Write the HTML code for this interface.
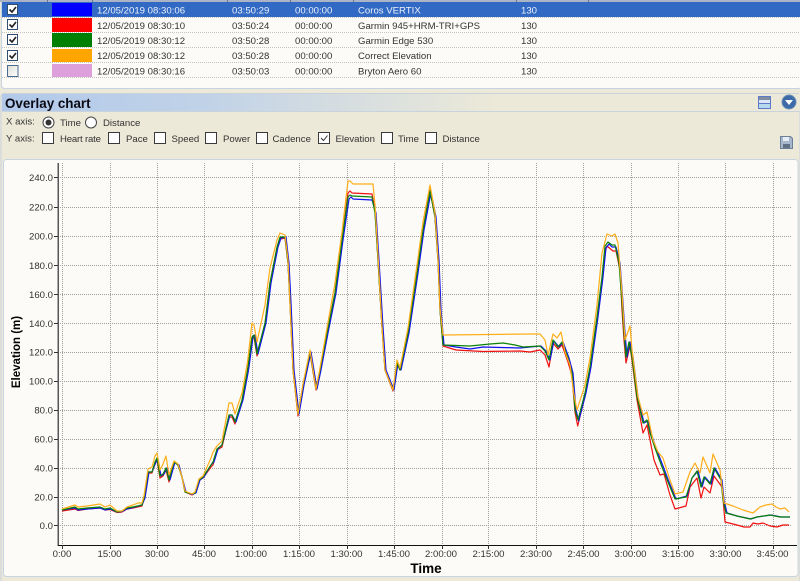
<!DOCTYPE html>
<html><head><meta charset="utf-8"><style>
html,body{margin:0;padding:0;background:#ECE9D8;overflow:hidden}
svg{display:block;filter:blur(.3px)}
text{font-family:"Liberation Sans",sans-serif;font-size:9.6px;fill:#333}
.b{font-weight:bold;fill:#000}
.g{stroke:#a0a09b;stroke-width:1;stroke-dasharray:1 1;fill:none;shape-rendering:crispEdges}
.c{fill:none;stroke-width:1.2;stroke-linejoin:round}
.box{fill:#fff;stroke:#2f4f6f;stroke-width:1}
.ck{fill:none;stroke:#222;stroke-width:1.6}
.ck2{fill:none;stroke:#333;stroke-width:1}
.bx{fill:#fff;stroke:#3a3a3a;stroke-width:1}
</style></head><body>
<svg xmlns="http://www.w3.org/2000/svg" width="800" height="581" viewBox="0 0 800 581">
<defs>
<linearGradient id="hd" x1="0" x2="1" y1="0" y2="0"><stop offset="0" stop-color="#B2C9EA"/><stop offset=".25" stop-color="#C0D2E8"/><stop offset=".62" stop-color="#ECE9D8"/><stop offset="1" stop-color="#ECE9D8"/></linearGradient>
<linearGradient id="cb" x1="0" x2="1" y1="0" y2="1"><stop offset="0" stop-color="#dcdcd6"/><stop offset="1" stop-color="#fff"/></linearGradient>
</defs>
<rect width="800" height="581" fill="#ECE9D8"/>
<!-- table -->
<rect x="1.5" y="-4" width="800" height="92.5" rx="3" fill="#FCFBF7" stroke="#C5D3E4"/>
<rect x="0" y="0" width="800" height="2" fill="#ABB4C6"/>
<g fill="#6c7486"><rect x="47" y="0" width="1" height="2"/><rect x="92" y="0" width="1" height="2"/><rect x="227" y="0" width="1" height="2"/><rect x="290" y="0" width="1" height="2"/><rect x="353" y="0" width="1" height="2"/><rect x="516" y="0" width="1" height="2"/><rect x="588" y="0" width="1" height="2"/></g>
<rect x="2" y="2" width="798" height="15" fill="#3169C4"/>
<g stroke="#c4c3bd" stroke-dasharray="1 1" shape-rendering="crispEdges"><line x1="2" x2="800" y1="32.5" y2="32.5"/><line x1="2" x2="800" y1="47.5" y2="47.5"/><line x1="2" x2="800" y1="62.5" y2="62.5"/><line x1="2" x2="800" y1="77.5" y2="77.5"/><line x1="2" x2="800" y1="17.5" y2="17.5"/></g>
<rect x="52" y="3" width="40" height="13" fill="#0000FF"/>
<rect x="52" y="18" width="40" height="14" fill="#FF0000"/>
<rect x="52" y="33" width="40" height="14" fill="#008000"/>
<rect x="52" y="49" width="40" height="13" fill="#FFA500"/>
<rect x="52" y="64" width="40" height="13" fill="#DDA0DD"/>
<g>
<rect class="box" x="7.5" y="4.5" width="10" height="10" fill="#fff"/><path class="ck" d="M9.5 9.5l2.5 2.5 4-5"/>
<rect class="box" x="7.5" y="19.5" width="10" height="10"/><path class="ck" d="M9.5 24.5l2.5 2.5 4-5"/>
<rect class="box" x="7.5" y="34.5" width="10" height="10"/><path class="ck" d="M9.5 39.5l2.5 2.5 4-5"/>
<rect class="box" x="7.5" y="50.5" width="10" height="10"/><path class="ck" d="M9.5 55.5l2.5 2.5 4-5"/>
<rect x="7.5" y="65.5" width="10.5" height="11" fill="url(#cb)" stroke="#4a6c90"/>
</g>
<g>
<g><text x="97" y="13.5" style="fill:#eef2fa">12/05/2019 08:30:06</text><text x="232" y="13.5" style="fill:#eef2fa">03:50:29</text><text x="295" y="13.5" style="fill:#eef2fa">00:00:00</text><text x="358" y="13.5" style="fill:#eef2fa">Coros VERTIX</text><text x="521" y="13.5" style="fill:#eef2fa">130</text></g>
<text x="97" y="29">12/05/2019 08:30:10</text><text x="232" y="29">03:50:24</text><text x="295" y="29">00:00:00</text><text x="358" y="29">Garmin 945+HRM-TRI+GPS</text><text x="521" y="29">130</text>
<text x="97" y="44">12/05/2019 08:30:12</text><text x="232" y="44">03:50:28</text><text x="295" y="44">00:00:00</text><text x="358" y="44">Garmin Edge 530</text><text x="521" y="44">130</text>
<text x="97" y="59">12/05/2019 08:30:12</text><text x="232" y="59">03:50:28</text><text x="295" y="59">00:00:00</text><text x="358" y="59">Correct Elevation</text><text x="521" y="59">130</text>
<text x="97" y="74.5">12/05/2019 08:30:16</text><text x="232" y="74.5">03:50:03</text><text x="295" y="74.5">00:00:00</text><text x="358" y="74.5">Bryton Aero 60</text><text x="521" y="74.5">130</text>
</g>
<!-- overlay header -->
<rect x="1" y="93.5" width="799" height="490" rx="3" fill="#ECE9D8" stroke="#C9D1DA"/>
<rect x="2" y="94" width="798" height="17" fill="url(#hd)"/>
<line x1="2" x2="800" y1="111.5" y2="111.5" stroke="#C9D3DD"/>
<text x="5" y="108" class="b" style="font-size:13.4px;fill:#0a0a14">Overlay chart</text>
<rect x="758.5" y="96.5" width="12" height="12" fill="#fff" stroke="#5f78c8"/><rect x="759" y="97" width="11" height="3" fill="#7f8ea0"/><rect x="759" y="100" width="11" height="3" fill="#dbe6f8"/><rect x="759" y="104" width="11" height="4" fill="#b7d9f0"/><line x1="759" x2="770" y1="103.5" y2="103.5" stroke="#5f78c8"/>
<circle cx="789" cy="102" r="7" fill="#3C6BA8"/><circle cx="789" cy="102" r="7" fill="none" stroke="#6f8fb8"/><path d="M785 100h8l-4 5z" fill="#fff"/>
<!-- controls -->
<text x="6" y="124.5">X axis:</text>
<circle cx="48.5" cy="122.5" r="5.5" fill="#fff" stroke="#444"/><circle cx="48.5" cy="122.5" r="3" fill="#333"/>
<text x="60" y="126">Time</text>
<circle cx="91" cy="122.5" r="5.5" fill="#fff" stroke="#444"/>
<text x="103" y="126">Distance</text>
<text x="6" y="141.5">Y axis:</text>
<rect class="bx" x="42.5" y="132.5" width="11" height="11"/><text x="60" y="142" textLength="41">Heart rate</text>
<rect class="bx" x="108.5" y="132.5" width="11" height="11"/><text x="126" y="142">Pace</text>
<rect class="bx" x="154.5" y="132.5" width="11" height="11"/><text x="171.5" y="142">Speed</text>
<rect class="bx" x="205.5" y="132.5" width="11" height="11"/><text x="223" y="142">Power</text>
<rect class="bx" x="256.5" y="132.5" width="11" height="11"/><text x="272.5" y="142">Cadence</text>
<rect class="bx" x="318.5" y="132.5" width="11" height="11"/><path class="ck2" d="M321 138l2.500 2.500 4-5"/><text x="335.5" y="142">Elevation</text>
<rect class="bx" x="381.5" y="132.5" width="11" height="11"/><text x="398" y="142">Time</text>
<rect class="bx" x="425.5" y="132.5" width="11" height="11"/><text x="442.5" y="142">Distance</text>
<path d="M780.5 136.5h10l2 2v10h-12z" fill="#a8b8cc" stroke="#6d8098"/><rect x="783" y="137" width="6" height="4" fill="#e8edf3"/><rect x="783" y="144" width="7" height="4" fill="#5f6f84"/>
<!-- chart panel -->
<rect x="3.5" y="159.5" width="794.5" height="417" rx="3" fill="#FCFBF7" stroke="#C6D4E4"/>
<g class="g">
<path d="M58 177.5H792M58 207.5H792M58 236.5H792M58 265.5H792M58 294.5H792M58 323.5H792M58 352.5H792M58 381.5H792M58 410.5H792M58 439.5H792M58 468.5H792M58 497.5H792M58 525.5H792"/>
<path d="M62.5 163V545M110.5 163V545M157.5 163V545M204.5 163V545M252.5 163V545M299.5 163V545M347.5 163V545M394.5 163V545M442.5 163V545M488.5 163V545M536.5 163V545M583.5 163V545M631.5 163V545M678.5 163V545M725.5 163V545M773.5 163V545"/>
</g>
<!-- axes -->
<g stroke="#333" fill="none" shape-rendering="crispEdges">
<path d="M58 163V546" stroke-width="1.5" stroke="#55555a"/>
<path d="M58 545.5H797" stroke="#111"/>
<path d="M54 177.5h4M54 207.5h4M54 236.5h4M54 265.5h4M54 294.5h4M54 323.5h4M54 352.5h4M54 381.5h4M54 410.5h4M54 439.5h4M54 468.5h4M54 497.5h4M54 525.5h4"/>
<path d="M62.5 545v4M110.5 545v4M157.5 545v4M204.5 545v4M252.5 545v4M299.5 545v4M347.5 545v4M394.5 545v4M442.5 545v4M488.5 545v4M536.5 545v4M583.5 545v4M631.5 545v4M678.5 545v4M725.5 545v4M773.5 545v4"/>
</g>
<g text-anchor="end">
<text x="53" y="181">240.0</text><text x="53" y="210.5">220.0</text><text x="53" y="239.5">200.0</text><text x="53" y="269">180.0</text><text x="53" y="298">160.0</text><text x="53" y="327">140.0</text><text x="53" y="355.5">120.0</text><text x="53" y="384.5">100.0</text><text x="53" y="413.5">80.0</text><text x="53" y="442.5">60.0</text><text x="53" y="471.5">40.0</text><text x="53" y="500.5">20.0</text><text x="53" y="529">0.0</text>
</g>
<g text-anchor="middle">
<text x="62" y="557">0:00</text><text x="109.5" y="557">15:00</text><text x="157" y="557">30:00</text><text x="204" y="557">45:00</text><text x="251" y="557">1:00:00</text><text x="299" y="557">1:15:00</text><text x="346.5" y="557">1:30:00</text><text x="394" y="557">1:45:00</text><text x="441" y="557">2:00:00</text><text x="488.5" y="557">2:15:00</text><text x="536" y="557">2:30:00</text><text x="583.5" y="557">2:45:00</text><text x="630.5" y="557">3:00:00</text><text x="678" y="557">3:15:00</text><text x="725.5" y="557">3:30:00</text><text x="772.5" y="557">3:45:00</text>
</g>
<text class="b" x="426" y="573" text-anchor="middle" style="font-size:13.5px">Time</text>
<text class="b" transform="translate(20,352) rotate(-90)" text-anchor="middle" style="font-size:11.5px">Elevation (m)</text>
<!-- curves -->
<polyline class="c" stroke="#F01010" points="62,511 75,509 78,510.5 87,509 100,508 105,510 110,509.5 117,512.5 122,512 127,509 133,508 142,506 144,499 148,473 152,473 155,463 157,460 160,478 163,476 166,470 169,482 174,462 178,465 182,477 185,492 192,495 195,493 199,480 203,478 211,467 213,465 217,450 222,447 229,417 232,417 235,424 242,401 247,374 248,367 252,338 254,337 257,356 265,324 270,283 277,248 280,239 285,238 288,263 290,303 292,347 293,370 298,416 303,385 310,353 316,390 320,370 327,333 335,293 342,240 348,193 350,191 352,193 372,194 375,210 378,260 382,327 385,370 393,391 397,363 400,370 408,333 417,273 423,230 430,190 435,217 438,260 440,310 443,346 456,350 483,351.5 520,351 530,352 540,350 545,355 549,367 553,343 558,349 562,345 568,362 572,376 575,412 577.7,426 585,396 590,369 597,320 602,280 605,252 607,246 613,251 616,251 620,270 622,310 624,340 626,363 630,346 632,360 637,400 643,433 647,425 654,460 660,475 664,474 670,495 675,509 686,506 690,487 697,478 701,498 704,487 710,493 714,476 722,487 725,522 737,525 744,527 750,527 753,523 758,524 763,523 770,526 777,527 783,525 789,525"/>
<polyline class="c" stroke="#1010F0" points="62,510 75,508 78,510 87,509 100,508 105,510 110,509 117,512 122,511.5 127,509 133,507.5 142,505 145,498 149,472 152,472 156,462 158,459 161,476 164,474 167,468 170,480 175,462 179,465 182,477 186,492 192,494.5 196,493 200,480 204,477 211,465 214,462 218,449 222,445 230,415 232,415 236,422 243,400 248,373 249,367 253,337 255,335 258,354 266,323 271,283 278,247 281,238 286,237 289,263 291,303 293,347 294,370 299,414 304,385 311,352 317,389 321,370 328,333 336,293 343,240 349,199 351,197 353,199 372,200 376,213 379,260 383,327 386,370 394,390 398,363 401,370 409,333 418,273 424,230 431,192 436,217 439,260 441,310 444,345 456,347 470,349 483,347 520,348 530,347 541,346 546,351 550,360 554,341 559,347 563,342 569,358 573,373 576,410 578.7,421 586,393 591,367 598,317 603,277 606,248 609,244 612,247 616,247 620,263 623,303 625,333 627,357 630,342 633,357 638,397 644,423 648,421 651,433 656,448 663,466 669,482 676,499 687,496 692,478 698,471 702,487 705,477 711,484 715,468 722,480 724,500 727,513 737,516 751,519 757,517 771,515 781,517 790,517"/>
<polyline class="c" stroke="#0A820A" points="62,510 75,507 78,509 87,508 100,507 105,509 110,508 117,512 122,511 127,508 133,507 142,505 144,498 148,472 152,472 155,462 157,458 160,476 163,474 166,468 169,480 174,462 178,465 182,477 185,492 192,494 195,493 199,480 203,477 211,465 213,462 217,449 222,445 229,415 232,415 235,422 242,400 247,373 248,367 252,337 254,335 257,354 265,323 270,283 277,247 280,237 285,237 288,263 290,303 292,347 293,370 298,414 303,385 310,352 316,389 320,370 327,333 335,293 342,240 348,197 350,195 352,196 372,197 375,213 378,260 382,327 385,370 393,390 397,363 400,370 408,333 417,273 423,230 430,191 435,217 438,260 440,310 443,345 470,346 490,344 503,343 515,345 523,347 540,346 545,351 549,360 553,340 558,347 562,342 568,358 572,373 575,410 578,420 585,393 590,367 597,317 602,277 605,246 608,242 612,245 615,245 619,263 622,303 624,333 626,357 629,342 632,357 637,397 643,423 647,420 650,433 655,448 662,467 668,482 675,499 686,497 692,478 697,471 701,487 704,477 710,484 714,468 721,480 723,500 726,513 737,516 750,519 757,517 770,515 780,517 790,517"/>
<polyline class="c" stroke="#FFAE1A" points="62,509 75,505 78,507 87,506 100,504 105,507 110,505 117,511 122,511 127,507 133,505 138,503 142,503 144,496 148,469 152,467 155,456 157,453 160,470 163,464 166,456 169,475 174,461 178,464 182,477 185,491 192,494 195,492 199,479 203,476 211,458 213,452 217,446 222,441 229,403 232,403 235,414 242,393 247,365 248,358 252,323 254,325 257,342 265,305 270,268 277,240 280,233 285,235 288,260 290,303 292,347 293,370 298,414 303,384 310,350 316,389 320,368 327,328 335,283 342,232 348,181 350,181 353,184 373,184 375,205 378,255 382,327 385,370 393,390 397,360 400,368 408,328 417,265 423,222 430,185 435,213 438,258 440,308 443,335 530,334 540,334 545,340 548,355 553,334 557,338 561,332 565,352 570,365 574,395 577,410 585,385 590,358 597,305 602,253 607,234 612,236 615,234 618,243 622,293 625,340 630,326 632,350 638,397 643,415 647,412 653,440 658,452 663,458 670,480 675,494 683,492 690,472 695,463 700,473 703,457 710,473 713,454 720,470 724,503 733,506 743,510 753,513 760,507 766,505 772,504 776,507 780,509 785,508 789,512"/>
</svg>
</body></html>
